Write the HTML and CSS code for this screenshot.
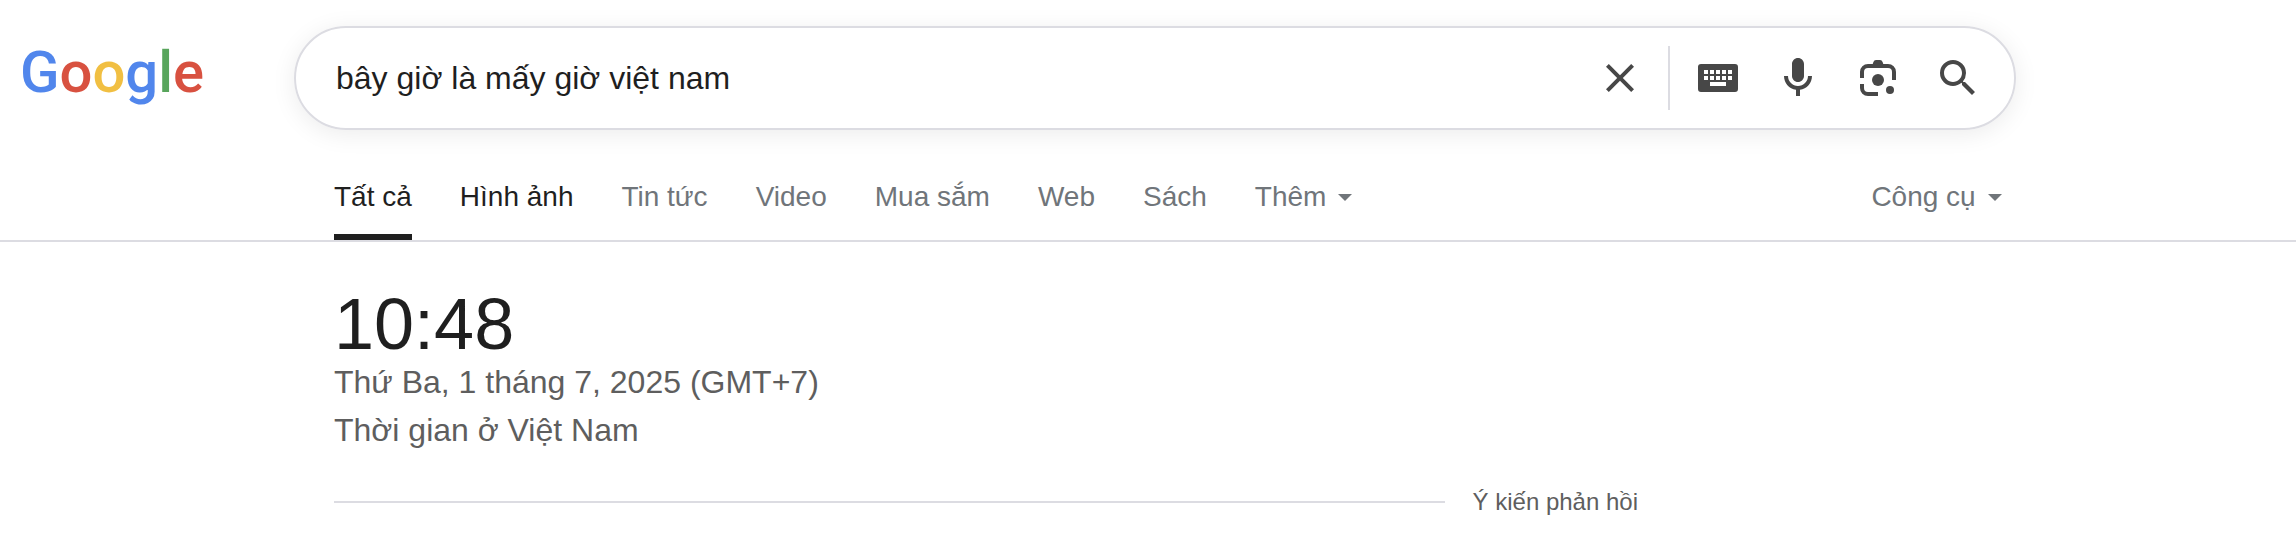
FILE: index.html
```html
<!DOCTYPE html>
<html lang="vi">
<head>
    <meta charset="UTF-8">
    <meta name="viewport" content="width=device-width, initial-scale=1.0">
    <title>bây giờ là mấy giờ việt nam - Google</title>
    <link rel="stylesheet" href="styles.css">
</head>
<body>
    <header class="header">
        <a class="logo" href="#"><span class="blue">G</span><span class="red">o</span><span class="yellow">o</span><span class="blue">g</span><span class="green">l</span><span class="red">e</span></a>
        <form class="search-box" role="search">
            <input class="search-input" type="text" name="q" aria-label="Tìm kiếm" value="bây giờ là mấy giờ việt nam" autocomplete="off" spellcheck="false">
            <button class="icon-btn clear-btn" type="reset" aria-label="Xóa">
                <svg viewBox="0 0 24 24"><path d="M19 6.41L17.59 5 12 10.59 6.41 5 5 6.41 10.59 12 5 17.59 6.41 19 12 13.41 17.59 19 19 17.59 13.41 12z"/></svg>
            </button>
            <span class="separator"></span>
            <button class="icon-btn" type="button" aria-label="Công cụ nhập văn bản">
                <svg viewBox="0 0 24 24"><path fill-rule="evenodd" d="M3.500 5h17A1.500 1.500 0 0 1 22 6.500v11a1.500 1.500 0 0 1-1.500 1.500h-17A1.500 1.500 0 0 1 2 17.500v-11A1.500 1.500 0 0 1 3.500 5zM5 8v2h2V8zm3 0v2h2V8zm3 0v2h2V8zm3 0v2h2V8zm3 0v2h2V8zM5 11v2h2v-2zm3 0v2h2v-2zm3 0v2h2v-2zm3 0v2h2v-2zm3 0v2h2v-2zM8 14v2h8v-2z"/></svg>
            </button>
            <button class="icon-btn" type="button" aria-label="Tìm kiếm bằng giọng nói">
                <svg viewBox="0 0 24 24"><path d="M12 14c1.660 0 3-1.340 3-3V5c0-1.660-1.340-3-3-3S9 3.340 9 5v6c0 1.660 1.340 3 3 3zM17 11c0 2.760-2.240 5-5 5s-5-2.240-5-5H5c0 3.530 2.610 6.430 6 6.920V21h2v-3.080c3.390-.49 6-3.390 6-6.920z"/></svg>
            </button>
            <button class="icon-btn" type="button" aria-label="Tìm kiếm bằng hình ảnh">
                <svg viewBox="0 0 24 24">
                    <path class="line" d="M4 12V9a3 3 0 0 1 3-3h10a3 3 0 0 1 3 3v4M4 15v2a3 3 0 0 0 3 3h5"/>
                    <path d="M9 6l.7-2q.3-1 1.300-1h2q1 0 1.300 1l.7 2z"/>
                    <circle cx="12" cy="13" r="3"/>
                    <circle cx="18" cy="18" r="2"/>
                </svg>
            </button>
            <button class="icon-btn" type="submit" aria-label="Tìm kiếm">
                <svg viewBox="0 0 24 24"><path d="M15.500 14h-.79l-.28-.27A6.471 6.471 0 0 0 16 9.500 6.500 6.500 0 1 0 9.500 16c1.610 0 3.090-.59 4.230-1.570l.27.28v.79l5 4.990L20.490 19l-4.990-5zm-6 0C7.010 14 5 11.990 5 9.500S7.010 5 9.500 5 14 7.010 14 9.500 11.990 14 9.500 14z"/></svg>
            </button>
        </form>
    </header>

    <nav class="nav">
        <div class="tabs">
            <a class="tab active" href="#">Tất cả</a>
            <a class="tab dark" href="#">Hình ảnh</a>
            <a class="tab" href="#">Tin tức</a>
            <a class="tab" href="#">Video</a>
            <a class="tab" href="#">Mua sắm</a>
            <a class="tab" href="#">Web</a>
            <a class="tab" href="#">Sách</a>
            <button class="tab menu" type="button">Thêm</button>
            <button class="tab menu tools" type="button">Công cụ</button>
        </div>
    </nav>

    <main class="result">
        <div class="time">10:48</div>
        <div class="detail">Thứ Ba, 1 tháng 7, 2025 (GMT+7)</div>
        <div class="detail">Thời gian ở Việt Nam</div>
        <div class="feedback">
            <a href="#">Ý kiến phản hồi</a>
        </div>
    </main>
</body>
</html>
```
FILE: styles.css
```css
* {
    box-sizing: border-box;
}
body {
    margin: 0;
    background-color: #fff;
    color: #1f1f1f;
    font-family: "Liberation Sans", Arial, sans-serif;
}
a {
    color: inherit;
    text-decoration: none;
}
button {
    padding: 0;
    border: none;
    background: none;
    font-family: inherit;
    cursor: pointer;
}

/* header */
.header {
    display: flex;
    align-items: center;
    padding-top: 26px;
}
.logo {
    flex: none;
    width: 294px;
    padding: 0 0 12px 20px;
    font-family: Roboto, "Liberation Sans", sans-serif;
    font-size: 58px;
    font-weight: 500;
    line-height: 72px;
}
.blue {
    color: #5186ec;
}
.red {
    color: #d85140;
}
.yellow {
    color: #f1bf42;
}
.green {
    color: #58a55c;
}
.search-box {
    display: flex;
    align-items: center;
    width: 75%;
    height: 104px;
    padding: 0 16px 0 40px;
    border: 2px solid #dcdce2;
    border-radius: 52px;
    box-shadow: 0 4px 24px rgba(0, 0, 0, 0.08);
}
.search-input {
    flex: 1;
    min-width: 0;
    padding: 0;
    border: none;
    outline: none;
    background: none;
    color: #1f1f1f;
    font-family: inherit;
    font-size: 32px;
    line-height: 40px;
}
.icon-btn {
    display: flex;
    align-items: center;
    justify-content: center;
    flex: none;
    width: 80px;
    height: 80px;
}
.icon-btn svg {
    width: 48px;
    height: 48px;
    fill: #474747;
}
.icon-btn .line {
    fill: none;
    stroke: #474747;
    stroke-width: 2;
}
.separator {
    width: 2px;
    height: 64px;
    margin: 0 8px;
    background-color: #dcdce2;
}

/* tabs */
.nav {
    padding: 51px 0 0 334px;
    border-bottom: 2px solid #dcdce2;
}
.tabs {
    display: flex;
    gap: 48px;
    width: 85%;
}
.tab {
    padding: 0 0 21px;
    border-bottom: 6px solid transparent;
    color: #70757a;
    font-size: 28px;
    line-height: 32px;
    white-space: nowrap;
}
.tab.dark {
    color: #1f1f1f;
}
.tab.active {
    color: #1f1f1f;
    border-color: #1f1f1f;
}
.menu {
    display: flex;
    align-items: center;
    gap: 12px;
}
.menu::after {
    content: "";
    border: 7px solid transparent;
    border-top-color: #70757a;
    border-bottom: none;
}
.tools {
    margin-left: auto;
}

/* answer */
.result {
    max-width: 1638px;
    padding: 48px 0 30px 334px;
}
.time {
    font-size: 72px;
    line-height: 68px;
}
.detail {
    color: #5e5e5e;
    font-size: 32px;
    line-height: 48px;
}
.feedback {
    display: flex;
    align-items: center;
    gap: 28px;
    margin-top: 32px;
    color: #5e5e5e;
    font-size: 24px;
    line-height: 32px;
}
.feedback::before {
    content: "";
    flex: 1;
    height: 2px;
    background-color: #dcdce2;
}
```
